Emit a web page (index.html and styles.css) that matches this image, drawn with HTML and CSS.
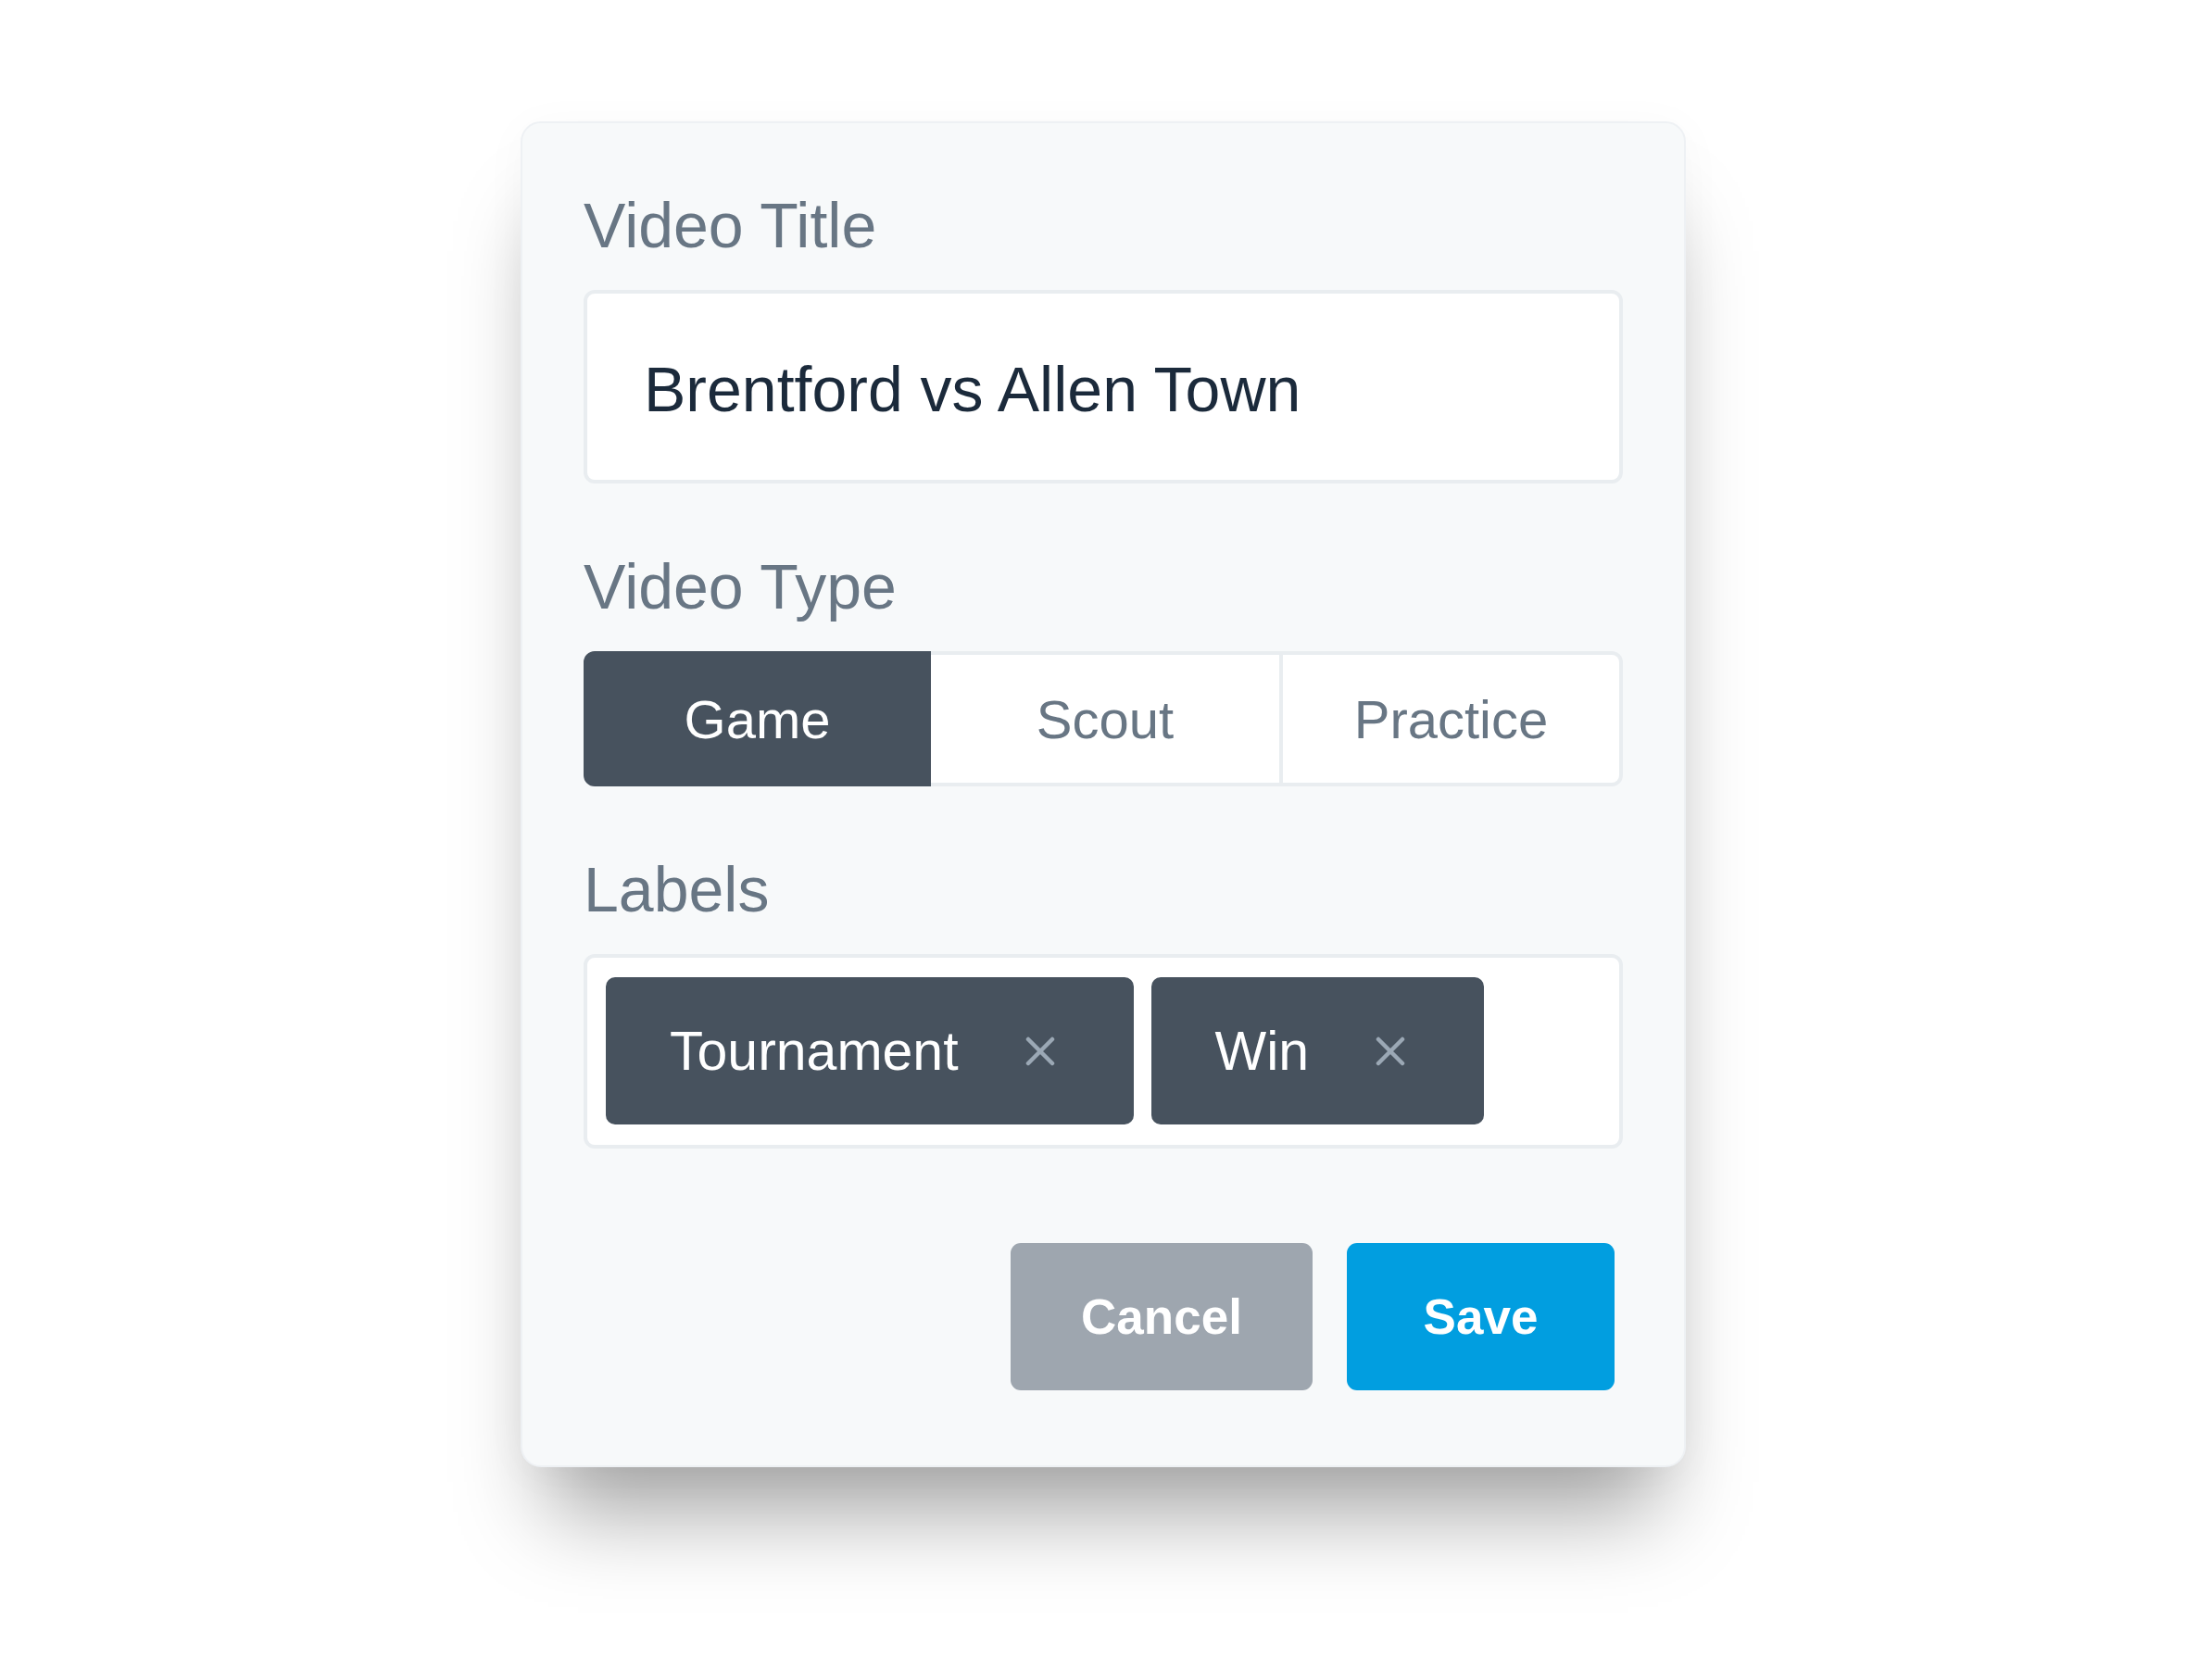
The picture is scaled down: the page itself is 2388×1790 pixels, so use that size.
FILE: index.html
```html
<!DOCTYPE html>
<html lang="en">
<head>
<meta charset="utf-8">
<title>Edit Video</title>
<link rel="stylesheet" href="styles.css">
</head>
<body>
<div class="page">
  <form class="card">
    <div class="field">
      <label class="label">Video Title</label>
      <div class="input">Brentford vs Allen Town</div>
    </div>
    <div class="field">
      <label class="label">Video Type</label>
      <div class="segmented">
        <div class="seg seg-active">Game</div>
        <div class="seg">Scout</div>
        <div class="seg seg-last">Practice</div>
      </div>
    </div>
    <div class="field">
      <label class="label">Labels</label>
      <div class="tags">
        <div class="tag">
          <span class="tag-text">Tournament</span>
          <svg class="tag-x" width="32" height="32" viewBox="0 0 32 32"><path d="M3 3L29 29M29 3L3 29" /></svg>
        </div>
        <div class="tag">
          <span class="tag-text">Win</span>
          <svg class="tag-x" width="32" height="32" viewBox="0 0 32 32"><path d="M3 3L29 29M29 3L3 29" /></svg>
        </div>
      </div>
    </div>
    <div class="actions">
      <button type="button" class="btn btn-cancel">Cancel</button>
      <button type="button" class="btn btn-save">Save</button>
    </div>
  </form>
</div>
</body>
</html>
```
FILE: styles.css
```css
html, body {
  margin: 0;
  padding: 0;
  background: #ffffff;
}

body {
  font-family: "Liberation Sans", Arial, Helvetica, sans-serif;
  min-height: 1790px;
}

.page {
  display: flex;
  justify-content: center;
  align-items: flex-start;
  min-height: 1790px;
  box-sizing: border-box;
  padding: 131px 6px 0 0;
}

.card {
  width: 1122px;
  background: #f7f9fa;
  border: 2px solid #eef1f4;
  border-radius: 22px;
  padding: 72px 66px 81px 66px;
  box-shadow: 0 78px 90px -30px rgba(0, 0, 0, 0.36), 0 6px 50px rgba(0, 0, 0, 0.03);
}

.field {
  display: flex;
  flex-direction: column;
}

.field + .field {
  margin-top: 73px;
}

.label {
  display: block;
  font-size: 68px;
  line-height: 76px;
  color: #687684;
  margin-bottom: 32px;
}

.input {
  background: #ffffff;
  border: 4px solid #e9edf0;
  border-radius: 12px;
  padding: 65px 20px 59px 61px;
  font-size: 68px;
  line-height: 77px;
  color: #1b2a3b;
}

.segmented {
  display: grid;
  grid-template-columns: 375px 380px 1fr;
  height: 146px;
}

.seg {
  display: flex;
  align-items: center;
  justify-content: center;
  background: #ffffff;
  border: 4px solid #e9edf0;
  border-left: 0;
  font-size: 58px;
  color: #687684;
}

.seg-active {
  background: #47525e;
  border: 4px solid #47525e;
  border-radius: 12px 0 0 12px;
  color: #ffffff;
}

.seg-last {
  border-radius: 0 12px 12px 0;
}

.tags {
  display: flex;
  gap: 19px;
  background: #ffffff;
  border: 4px solid #e9edf0;
  border-radius: 12px;
  padding: 21px 20px 22px 20px;
}

.tag {
  display: flex;
  align-items: center;
  gap: 72px;
  height: 159px;
  padding: 0 85px 0 69px;
  background: #47525e;
  border-radius: 10px;
  color: #ffffff;
  font-size: 59px;
}

.tag-x {
  display: block;
  flex: none;
}

.tag-x path {
  stroke: #9ba8b5;
  stroke-width: 4.5;
  stroke-linecap: round;
  fill: none;
}

.actions {
  display: flex;
  justify-content: flex-end;
  gap: 37px;
  margin-top: 102px;
  padding-right: 9px;
}

.btn {
  height: 159px;
  border: 0;
  border-radius: 11px;
  font-family: "Liberation Sans", Arial, Helvetica, sans-serif;
  font-weight: bold;
  font-size: 53px;
  color: #ffffff;
  padding: 0;
  cursor: pointer;
}

.btn-cancel {
  width: 326px;
  background: #9ea6af;
}

.btn-save {
  width: 289px;
  background: #019ee0;
}
```
